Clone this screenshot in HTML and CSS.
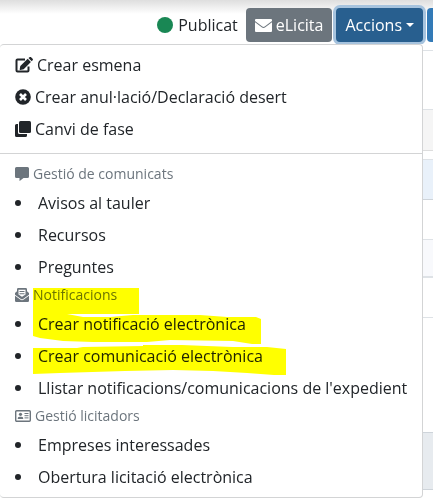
FILE: index.html
```html
<!DOCTYPE html>
<html lang="ca">
<head>
    <meta charset="UTF-8">
    <meta name="viewport" content="width=device-width, initial-scale=1.0">
    <title>Accions de l'expedient</title>
    <link rel="stylesheet" href="styles.css">
</head>
<body>

    <header class="toolbar">
        <div class="toolbar-buttons">
            <span class="status"><span class="status-dot"></span>Publicat</span>
            <button type="button" class="btn btn-secondary">
                <svg width="17" height="13" viewBox="0 0 17 13" fill="currentColor"><path d="M1 0h15a1 1 0 0 1 1 1v1L9.700 7.600a2 2 0 0 1-2.400 0L0 2V1a1 1 0 0 1 1-1z"/><path d="M0 3.200l6.700 5.100a3 3 0 0 0 3.600 0L17 3.200V12a1 1 0 0 1-1 1H1a1 1 0 0 1-1-1z"/></svg>
                eLicita
            </button>
            <button type="button" class="btn btn-primary open" aria-expanded="true">Accions<span class="caret"></span></button>
            <button type="button" class="btn btn-next" aria-label="Següent"></button>
        </div>

        <!-- Actions menu -->
        <nav class="menu">
            <svg class="marks" width="253" height="87" viewBox="0 0 253 87"><path d="M0 0H106V26H34L50 29 77 29 100 27 167 27 194 29 223 29 228 31V56H219L200 53 137 52 114 54 60 54 30 53 7 50 0 48z"/><path d="M0 60H44L50 59 110 58V57H149L174 58 200 59H234L253 61V87H241L214 85 180 83 140 82 92 83 27 85 0 86z"/></svg>

            <a href="#" class="menu-item">
                <svg width="18" height="16" viewBox="0 0 18 16"><path d="M10 2.500H2.500a1 1 0 0 0-1 1v10a1 1 0 0 0 1 1h10a1 1 0 0 0 1-1V9.500" fill="none" stroke="currentColor" stroke-width="2"/><path d="M12.700 1.800l3.200 3.200-7.200 7.200-3.500.7a.5.500 0 0 1-.5-.6l.6-3.300zM13.500 1l1-.8a1.200 1.200 0 0 1 1.600 0l1.500 1.500a1.200 1.200 0 0 1 0 1.600l-.9 1z" fill="currentColor"/></svg>
                Crear esmena
            </a>
            <a href="#" class="menu-item">
                <svg width="16" height="16" viewBox="0 0 16 16"><circle cx="8" cy="8" r="7.800" fill="currentColor"/><path d="M5 5l6 6M11 5l-6 6" stroke="#fff" stroke-width="2.600"/></svg>
                Crear anul·lació/Declaració desert
            </a>
            <a href="#" class="menu-item">
                <svg width="16" height="16" viewBox="0 0 16 16" fill="currentColor"><rect x="4" width="12" height="12" rx="1.500"/><path d="M0 4.500A1.500 1.500 0 0 1 1.500 3H3v8.500A1.500 1.500 0 0 0 4.500 13H12v1.500a1.500 1.500 0 0 1-1.500 1.500h-9A1.500 1.500 0 0 1 0 14.500z"/></svg>
                Canvi de fase
            </a>

            <hr>

            <h6>
                <svg width="14" height="14" viewBox="0 0 14 14" fill="currentColor"><path d="M1.500 0h11A1.500 1.500 0 0 1 14 1.500v8a1.500 1.500 0 0 1-1.500 1.500H8.500L5 13.800a.3.300 0 0 1-.5-.3V11h-3A1.500 1.500 0 0 1 0 9.500v-8A1.500 1.500 0 0 1 1.500 0z"/></svg>
                Gestió de comunicats
            </h6>
            <ul>
                <li><a href="#">Avisos al tauler</a></li>
                <li><a href="#">Recursos</a></li>
                <li><a href="#">Preguntes</a></li>
            </ul>

            <h6>
                <svg width="14" height="14" viewBox="0 0 14 14" fill="currentColor"><path d="M0 5l2-1.700h10L14 5v1.800L8.400 10.700a2.400 2.400 0 0 1-2.800 0L0 6.800z"/><path d="M2 1.300A1.300 1.300 0 0 1 3.300 0h7.400A1.300 1.300 0 0 1 12 1.300V7L8.200 9.700a2 2 0 0 1-2.400 0L2 7z"/><path d="M3.500 1.800h7v4.600L7.500 8.500a1 1 0 0 1-1 0l-3-2.100z" fill="#fff"/><path d="M4.500 3.500h5M4.500 5.700h5" stroke="currentColor" stroke-width="1.100"/><path d="M0 7.800l5.200 3.700a3 3 0 0 0 3.600 0L14 7.800v4.900a1.300 1.300 0 0 1-1.300 1.300H1.300A1.300 1.300 0 0 1 0 12.700z"/></svg>
                Notificacions
            </h6>
            <ul>
                <li><a href="#">Crear notificació electrònica</a></li>
                <li><a href="#">Crear comunicació electrònica</a></li>
                <li><a href="#">Llistar notificacions/comunicacions de l'expedient</a></li>
            </ul>

            <h6>
                <svg width="16" height="12" viewBox="0 0 16 12" fill="currentColor"><rect x=".7" y=".7" width="14.600" height="10.600" rx="1" fill="none" stroke="currentColor" stroke-width="1.400"/><circle cx="5.500" cy="4.300" r="1.600"/><path d="M2.800 9a2 2 0 0 1 2-2.300h1.400A2 2 0 0 1 8.200 9z"/><path d="M9.500 3.500h4M9.500 5.700h4M9.500 7.900h4" stroke="currentColor"/></svg>
                Gestió licitadors
            </h6>
            <ul>
                <li><a href="#">Empreses interessades</a></li>
                <li><a href="#">Obertura licitació electrònica</a></li>
            </ul>
        </nav>
    </header>

    <!-- Page behind the menu -->
    <main class="page">
        <div class="panel panel-blank"></div>
        <div class="panel panel-grey"></div>
        <div class="panel panel-blue"></div>
        <div class="panel panel-pale"></div>
        <div class="panel panel-row"></div>
        <div class="panel panel-footer"></div>
    </main>

</body>
</html>
```

FILE: styles.css
```css
* {
    box-sizing: border-box;
}

body {
    margin: 0;
    min-height: 100vh;
    background-color: #fff;
    color: #212529;
    font-family: "Open Sans", "Noto Sans", sans-serif;
    font-size: 16px;
    font-feature-settings: "locl" 0;
    line-height: 24px;
}

/* Toolbar */
.toolbar {
    position: relative;
    background: linear-gradient(#dedede, #fff 14px);
}

.toolbar-buttons {
    display: flex;
    justify-content: flex-end;
    align-items: center;
    gap: 4px;
    height: 44px;
    padding-top: 6px;
    overflow: hidden;
}

.status {
    display: flex;
    align-items: center;
    gap: 5px;
    margin-right: 4px;
}

.status-dot {
    width: 16px;
    height: 16px;
    border-radius: 50%;
    background-color: #198754;
}

.btn {
    display: flex;
    align-items: center;
    gap: 4px;
    height: 34px;
    padding: 0 9px;
    border: none;
    border-radius: 4px;
    color: #fff;
    font: inherit;
    white-space: nowrap;
    cursor: pointer;
}

.btn-secondary {
    background-color: #6c757d;
}

.btn-primary {
    background-color: #285f8f;
}

.btn-primary.open {
    box-shadow: 0 0 0 3px #a6c3de;
}

.btn-next {
    width: 6px;
    padding: 0;
    border-radius: 4px 0 0 4px;
    background-color: #337ab7;
}

.caret {
    border-top: 4px solid #fff;
    border-left: 4px solid transparent;
    border-right: 4px solid transparent;
}

/* Dropdown menu */
.menu {
    position: absolute;
    top: 100%;
    left: 0;
    right: 10px;
    padding: 4px 0;
    background-color: #fff;
    border: 1px solid #d3d4d5;
    border-left: none;
    border-radius: 4px;
}

.menu a {
    color: #212529;
    text-decoration: none;
}

.menu-item {
    display: flex;
    align-items: center;
    gap: 4px;
    height: 32px;
    padding: 0 15px;
}

.menu hr {
    margin: 8px 0;
    border: none;
    border-top: 1px solid #d3d4d5;
}

.menu h6 {
    display: flex;
    align-items: center;
    gap: 4px;
    height: 25px;
    margin: 0;
    padding: 0 15px 2px;
    color: #6c757d;
    font-size: 14px;
    font-weight: 400;
}

.menu ul {
    margin: 0;
    padding: 0;
    list-style: none;
}

.menu li {
    display: flex;
    align-items: center;
    gap: 17px;
    height: 32px;
    padding-left: 15px;
    white-space: nowrap;
}

.menu li::before {
    content: "";
    width: 6px;
    height: 6px;
    border-radius: 50%;
    background-color: #212529;
}

/* Yellow marker strokes over the notification entries */
.marks {
    position: absolute;
    top: 243px;
    left: 33px;
    fill: #ff0;
    mix-blend-mode: multiply;
    pointer-events: none;
}

/* Page */
.page {
    padding: 6px 0 12px;
}

.panel {
    border-top: 1px solid #dee2e6;
}

.panel-blank {
    height: 59px;
}

.panel-grey {
    height: 42px;
    background-color: #f5f5f5;
    border-bottom: 1px solid #ddd;
}

.panel-blue {
    height: 41px;
    margin-top: 8px;
    background-color: #e9f1fa;
    border-bottom: 1px solid #ced4da;
}

.panel-pale {
    height: 39px;
    margin-top: 39px;
    background-color: #f8f9fc;
    border-bottom: 2px solid #dee2e6;
}

.panel-row {
    height: 75px;
    margin-top: 39px;
}

.panel-footer {
    height: 58px;
    margin-top: 40px;
    background-color: #e7ebef;
    border-top: 1px solid #ced4da;
    border-bottom: 1px solid #ced4da;
}
```
